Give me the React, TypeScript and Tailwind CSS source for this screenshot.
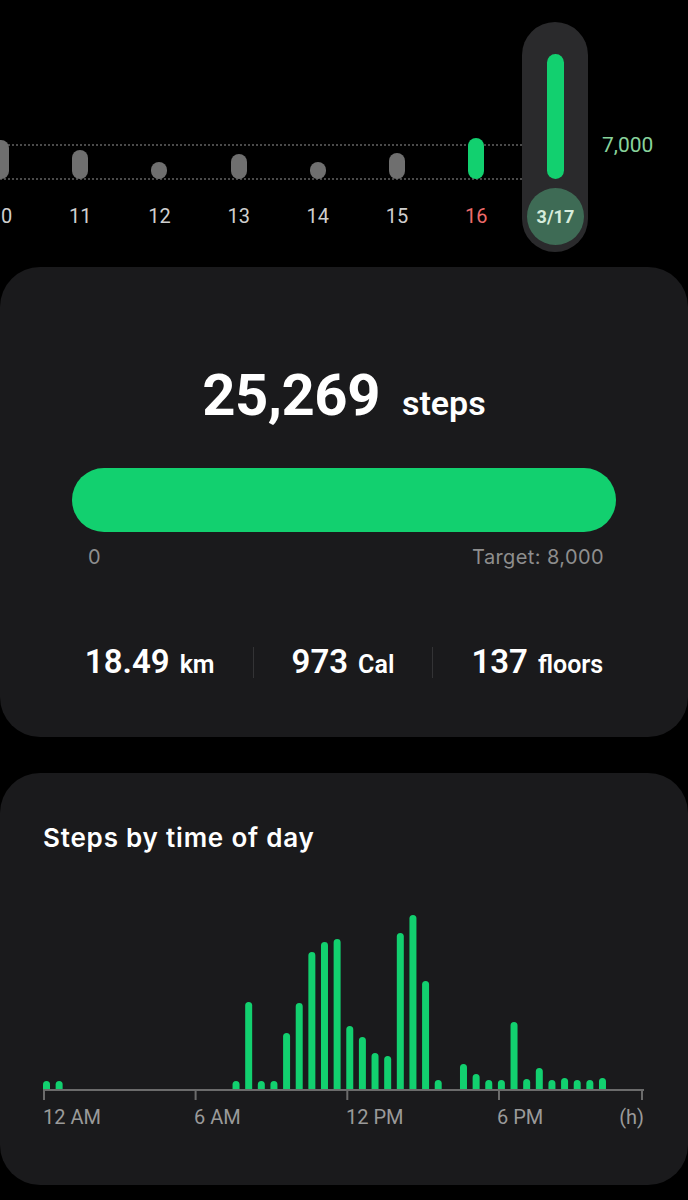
import React from "react";

const topCols = [
  { label: "10", h: 39, color: "#6f6f6f" },
  { label: "11", h: 29, color: "#6f6f6f" },
  { label: "12", h: 17, color: "#6f6f6f" },
  { label: "13", h: 25, color: "#6f6f6f" },
  { label: "14", h: 17, color: "#6f6f6f" },
  { label: "15", h: 26, color: "#6f6f6f" },
  { label: "16", h: 41, color: "#12d06f", red: true },
];

const barTops: Record<number, number> = {
  0: 1081, 1: 1081, 15: 1081, 16: 1002, 17: 1081, 18: 1081, 19: 1033, 20: 1003,
  21: 952, 22: 942, 23: 939, 24: 1026, 25: 1037, 26: 1053, 27: 1056, 28: 933,
  29: 915, 30: 981, 31: 1080, 33: 1064, 34: 1074, 35: 1080, 36: 1080, 37: 1022,
  38: 1079, 39: 1068, 40: 1080, 41: 1078, 42: 1080, 43: 1080, 44: 1078,
};

function DayChart() {
  const axisY = 190; // svg y of axis (page 1090)
  const offset = 900;
  const stride = 12.636;
  const w = 7;
  const r = 3.5;
  const bars = Object.entries(barTops).map(([k, top]) => {
    const i = Number(k);
    const x = i * stride;
    const t = top - offset;
    const b = axisY;
    const d = `M${x},${b} V${t + r} A${r},${r} 0 0 1 ${x + w},${t + r} V${b} Z`;
    return <path key={i} d={d} fill="#12d06f" />;
  });
  const ticks = [1, 152.6, 304.3, 456, 599];
  return (
    <svg width="604" height="201" viewBox="0 0 604 201" className="block">
      {bars}
      <rect x="0" y={axisY - 1} width="601" height="2" fill="#6b6b6b" />
      {ticks.map((t) => (
        <rect key={t} x={t - 1} y={axisY - 1} width="2" height="11" fill="#6b6b6b" />
      ))}
    </svg>
  );
}

export default function App() {
  return (
    <div className="w-[688px] min-h-[1200px] bg-black font-['Roboto',sans-serif] overflow-hidden">
      {/* Top weekly strip */}
      <div className="relative h-[267px] pt-[22px]">
        <div className="absolute left-0 top-[144px] w-[522px] border-t-2 border-dotted border-[#4a4a4a]" />
        <div className="absolute left-0 top-[178px] w-[522px] border-t-2 border-dotted border-[#4a4a4a]" />
        <div className="relative flex -ml-[38.5px]">
          {topCols.map((c) => (
            <div key={c.label} className="w-[79.2px] shrink-0 flex flex-col items-center">
              <div className="h-[157px] flex items-end justify-center">
                <div
                  className="w-[16px] rounded-full"
                  style={{ height: c.h, backgroundColor: c.color }}
                />
              </div>
              <div
                className={`mt-[25px] text-[20px] leading-[24px] ${
                  c.red ? "text-[#ee6b6b]" : "text-[#cfcfcf]"
                }`}
              >
                {c.label}
              </div>
            </div>
          ))}
          <div className="w-[79.2px] shrink-0 flex justify-center">
            <div className="w-[66px] h-[230px] rounded-full bg-[#2a2a2c] flex flex-col items-center pt-[32px]">
              <div className="w-[17px] h-[125px] rounded-full bg-[#12d06f]" />
              <div className="mt-[9px] w-[57px] h-[57px] rounded-full bg-[#3e6b55] flex items-center justify-center text-[18px] font-bold text-[#d6ecdc]">
                3/17
              </div>
            </div>
          </div>
          <div className="ml-[7px] mt-[111px] text-[21px] leading-[24px] text-[#88d39c]">7,000</div>
        </div>
      </div>

      {/* Summary card */}
      <div className="h-[470px] rounded-[40px] bg-[#1a1a1c] pt-[99px] px-[72px]">
        <div className="flex items-baseline justify-center gap-[22px] text-white">
          <span className="text-[58px] leading-none font-bold tracking-[-0.5px]">25,269</span>
          <span className="text-[34px] leading-none font-semibold">steps</span>
        </div>
        <div className="mt-[44px] h-[64px] rounded-full bg-[#12d06f]" />
        <div className="mt-[13px] flex justify-between pl-[16px] pr-[12px] text-[20px] leading-[24px] text-[#8e8e8e] font-['Inter',sans-serif] tracking-[0.4px]">
          <span>0</span>
          <span>Target: 8,000</span>
        </div>
        <div className="mt-[73px] flex items-center justify-center gap-[38px] text-white">
          <div className="flex items-baseline gap-[10px]">
            <span className="text-[33px] leading-[40px] font-semibold">18.49</span>
            <span className="text-[25px] font-semibold">km</span>
          </div>
          <div className="w-px h-[31px] bg-[#333335]" />
          <div className="flex items-baseline gap-[10px]">
            <span className="text-[33px] leading-[40px] font-semibold">973</span>
            <span className="text-[25px] font-semibold">Cal</span>
          </div>
          <div className="w-px h-[31px] bg-[#333335]" />
          <div className="flex items-baseline gap-[10px]">
            <span className="text-[33px] leading-[40px] font-semibold">137</span>
            <span className="text-[25px] font-semibold">floors</span>
          </div>
        </div>
      </div>

      {/* Steps by time of day */}
      <div className="mt-[36px] h-[412px] rounded-[40px] bg-[#1a1a1c] pt-[49px]">
        <div className="pl-[43px] text-[26px] leading-[32px] font-semibold tracking-[0.8px] text-white font-['Inter',sans-serif]">
          Steps by time of day
        </div>
        <div className="mt-[46px] pl-[43px]">
          <DayChart />
          <div className="mt-[4px] flex w-[601px] text-[20px] leading-[24px] text-[#9a9a9a]">
            <span className="w-[151px] shrink-0">12 AM</span>
            <span className="w-[152px] shrink-0">6 AM</span>
            <span className="w-[151px] shrink-0">12 PM</span>
            <div className="flex-1 flex justify-between">
              <span>6 PM</span>
              <span>(h)</span>
            </div>
          </div>
        </div>
      </div>
    </div>
  );
}
